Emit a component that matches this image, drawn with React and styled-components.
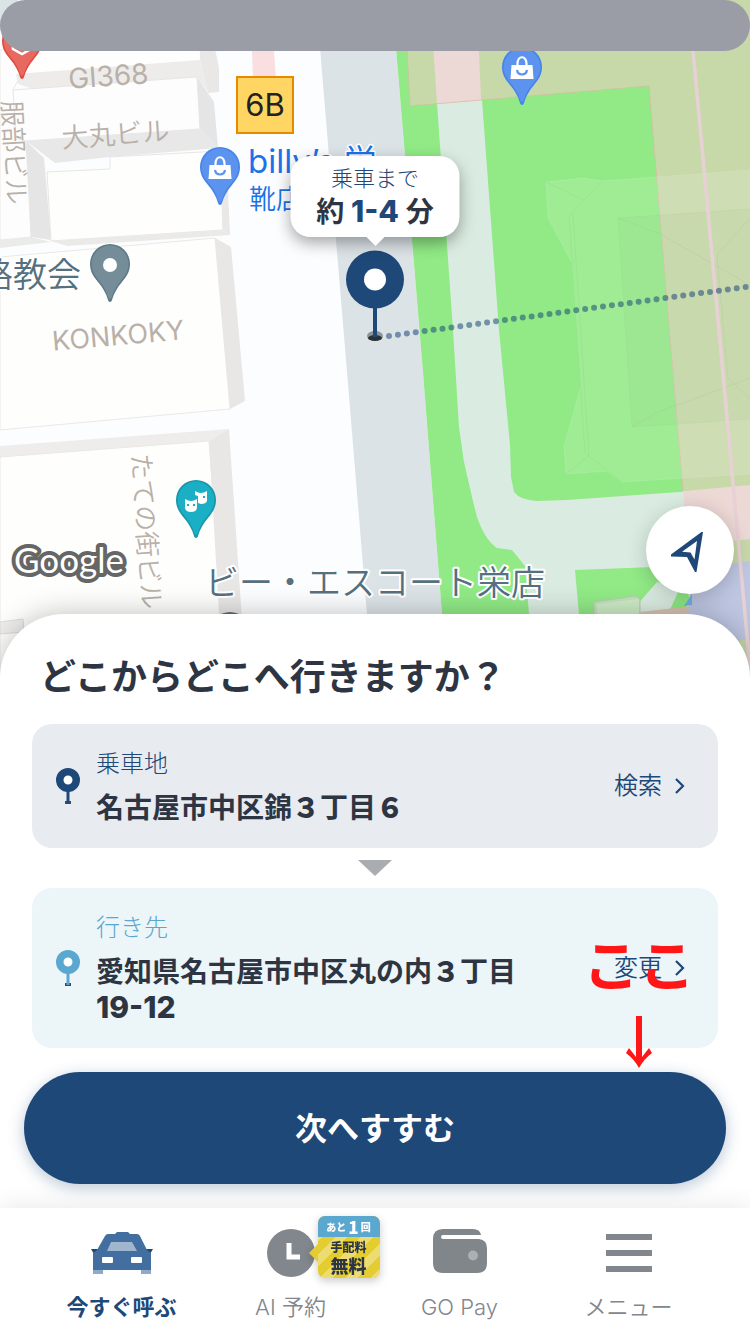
import React from 'react';
import styled, { createGlobalStyle } from 'styled-components';

const NAVY = '#1e4878';
const SKY = '#5aa7cf';
const INK = '#2d3542';
const GREY = '#82868d';

const GlobalStyle = createGlobalStyle`
	* {
		box-sizing: border-box;
	}
	body {
		margin: 0;
		background: #ffffff;
		color: ${INK};
		font-family: Inter, "Noto Sans CJK JP", sans-serif;
	}
	button {
		margin: 0;
		padding: 0;
		border: 0;
		background: none;
		color: inherit;
		font: inherit;
		cursor: pointer;
	}
`

const Page = styled.div`
	display: flex;
	flex-direction: column;
	min-height: 100vh;
	overflow-x: hidden;
`
const StatusBar = styled.div`
	position: absolute;
	top: 0;
	left: 0;
	right: 0;
	height: 51px;
	border-radius: 26px;
	background: #9b9da6;
`
const MapArea = styled.section`
	position: relative;
	height: 700px;
	overflow: hidden;
	background: #fbfdfe;
`
const MapDrawing = styled.svg`
	display: block;
	width: 100%;
	height: 100%;
`
const Bubble = styled.div`
	position: absolute;
	top: 156px;
	left: 50%;
	transform: translateX(-50%);
	display: flex;
	flex-direction: column;
	align-items: center;
	min-width: 169px;
	padding: 6px 16px 7px;
	border-radius: 20px;
	background: #ffffff;
	box-shadow: 0 6px 16px rgba(0, 0, 0, 0.35);
	white-space: nowrap;

	&::after {
		content: '';
		position: absolute;
		top: 100%;
		left: 50%;
		margin-left: -9px;
		border: 9px solid transparent;
		border-top-color: #ffffff;
		border-bottom: 0;
	}
`
const BubbleLabel = styled.span`
	color: ${NAVY};
	font-size: 22px;
	font-weight: 300;
	line-height: 32px;
`
const BubbleTime = styled.span`
	font-size: 28px;
	font-weight: 700;
	line-height: 36px;

	b {
		color: ${NAVY};
		font-size: 30px;
		font-weight: 800;
		line-height: 30px;
	}
`
const LocateButton = styled.button`
	position: absolute;
	top: 506px;
	right: 16px;
	width: 88px;
	height: 88px;
	border-radius: 50%;
	background: #ffffff;
	box-shadow: 0 4px 20px rgba(0, 0, 0, 0.2);

	svg {
		display: block;
	}
`
const Sheet = styled.main`
	position: relative;
	margin-top: -86px;
	padding: 36px 24px 24px;
	border-radius: 64px 64px 0 0;
	background: #ffffff;
	box-shadow: 0 0 28px rgba(0, 0, 0, 0.25);
`
const Heading = styled.h1`
	margin: 0 0 20px;
	padding: 0 16px;
	font-size: 36px;
	font-weight: 700;
	line-height: 54px;
`
const Stops = styled.div`
	display: flex;
	flex-direction: column;
	padding: 0 8px;
	margin-bottom: 24px;
`
const Card = styled.section`
	display: flex;
	align-items: center;
	gap: 16px;
	padding: 22px 32px 22px 24px;
	border-radius: 20px;
	background: ${props => props.$dropoff ? '#ecf5f8' : '#e8ebf0'};
`
const StopText = styled.div`
	flex: 1;
	min-width: 0;
	padding-right: 48px;
`
const StopLabel = styled.h2`
	margin: 0 0 8px;
	color: ${props => props.$dropoff ? SKY : NAVY};
	font-size: 24px;
	font-weight: 300;
	line-height: 36px;
`
const Address = styled.p`
	margin: 0;
	font-size: 28px;
	font-weight: 700;
	line-height: 36px;

	b {
		font-weight: 900;
	}
	span {
		font-size: 30px;
		font-weight: 800;
		line-height: 30px;
		white-space: nowrap;
	}
`
const CardAction = styled.button`
	display: flex;
	align-items: center;
	gap: 12px;
	color: ${NAVY};
	font-size: 24px;
	font-weight: 350;
	line-height: 36px;
`
const Down = styled.svg`
	align-self: center;
	margin: 12px 0;
`
const NextButton = styled.button`
	display: block;
	width: 100%;
	height: 112px;
	padding-bottom: 4px;
	border-radius: 56px;
	background: ${NAVY};
	box-shadow: 0 4px 16px rgba(30, 72, 120, 0.3);
	color: #ffffff;
	font-size: 32px;
	font-weight: 700;
`
const Note = styled.div`
	position: absolute;
	right: 55px;
	bottom: 140px;
	display: flex;
	flex-direction: column;
	align-items: center;
	gap: 8px;
	color: #ff1616;
	font-size: 56px;
	font-weight: 700;
	line-height: 84px;
	pointer-events: none;
`
const TabBar = styled.nav`
	position: relative;
	display: flex;
	flex: 1;
	min-height: 126px;
	padding: 0 37px;
	background: #ffffff;
	box-shadow: 0 0 24px rgba(0, 0, 0, 0.1);
`
const Tab = styled.button`
	flex: 1;
	display: flex;
	flex-direction: column;
	align-items: center;
	gap: 10px;
	padding-top: 17px;
	color: ${props => props.$active ? NAVY : GREY};
	font-size: 22px;
	font-weight: ${props => props.$active ? 700 : 350};
	line-height: 32px;
	white-space: nowrap;
`
const TabIcon = styled.span`
	position: relative;
	display: flex;
	align-items: center;
	justify-content: center;
	width: 64px;
	height: 56px;
`
const Badge = styled.span`
	position: absolute;
	top: -9px;
	left: 50px;
	padding-left: 9px;
	filter: drop-shadow(0 3px 4px rgba(0, 0, 0, 0.2));

	&::before {
		content: '';
		position: absolute;
		left: 0;
		top: 28px;
		border: 9px solid transparent;
		border-right-color: #e3cd31;
		border-left: 0;
	}
`
const BadgeBody = styled.span`
	display: flex;
	flex-direction: column;
	align-items: center;
	width: 62px;
	height: 62px;
	border-radius: 7px;
	background: repeating-linear-gradient(135deg, #e3cd31 0 9px, #ecdc72 9px 18px);
	color: ${INK};
	font-family: "Noto Sans CJK JP", sans-serif;
	font-weight: 900;
`
const BadgeTop = styled.span`
	display: flex;
	align-items: center;
	justify-content: center;
	gap: 2px;
	width: 100%;
	height: 21px;
	border-radius: 7px 7px 0 0;
	background: ${SKY};
	color: #ffffff;
	font-size: 10px;
	line-height: 21px;

	b {
		font-size: 17px;
	}
`
const BadgeLine = styled.span`
	font-size: ${props => props.$large ? 18 : 12}px;
	line-height: ${props => props.$large ? 18 : 19}px;
`

const PIN = 'M0-20A20 20 0 0 1 20 0C20 8 16 13 12 18C7 24 4 29 2 36C1.400 38.600-1.400 38.600-2 36C-4 29-7 24-12 18C-16 13-20 8-20 0A20 20 0 0 1 0-20Z'

const MapPin = ({ x, y, fill, edge, children }) => (
	<g transform={`translate(${x} ${y})`}>
		<path d={PIN} fill={edge} />
		<path d={PIN} fill={fill} transform="scale(.92)" />
		{children}
	</g>
)

const Bag = () => (
	<g>
		<path d="M-10.500-2H10.500L11.500 12H-11.500Z" fill="#fff" />
		<path d="M-4.500 0V-3C-4.500-12 4.500-12 4.500-3V0" fill="none" stroke="#fff" strokeWidth="2.200" />
		<path d="M-5 3C-4 9 4 9 5 3" fill="none" stroke="#5c93ee" strokeWidth="2.200" />
	</g>
)

const CityMap = () => (
	<MapDrawing viewBox="0 0 750 700" preserveAspectRatio="xMidYMin slice" aria-label="地図">
		<rect width="750" height="700" fill="#fbfdfe" />
		<path d="M0 0H30V30H0Z" fill="#dae4e6" />

		{/* roads and park */}
		<path d="M316 0H392L422 360L442 614L446 700H375L367 614L346 360Z" fill="#dce3e7" />
		<path d="M392 0H750V700H446L442 614L422 360Z" fill="#91ea86" />
		<path d="M430 0H477L482 100L499 330L510 445L511 477L514 492Q520 500 537 501L567 500L750 487V700H532L529 614L525 566L512 550L497 548Q485 540 477 517L472 497L464 462L459 427L453 330L437 103Z" fill="#daece1" />
		<path d="M575 570L680 566L690 600L683 614V700H582L579 614Z" fill="#91ea86" />
		<path d="M629 614L657 582L680 588L668 614Z" fill="#daece1" />
		<path d="M594 602L636 596L640 599V614H594Z" fill="#c4dfbd" stroke="#b6cdb0" />
		<path d="M597 604L639 599V614H597Z" fill="#cdebc5" />
		<path d="M640 612L692 606L683 640H640Z" fill="#d8c3b2" />

		{/* station area */}
		<path d="M405 0H750V486L683 491L649 86L410 106Z" fill="#c7d8a9" />
		<path d="M430 0H477L481 100L437 104Z" fill="#ecd8d5" />
		<path d="M407 51L410 106L649 86L683 491" fill="none" stroke="#dcb9a5" strokeOpacity=".7" />
		<path d="M683 491L750 485V540L688 546Z" fill="#ecd8d5" />
		<path d="M688 546L750 539V562L692 572Z" fill="#c7d8a9" />
		<path d="M692 572L735 563L750 561V640L740 700H680Z" fill="#bec6e2" />
		<path d="M684 606L692 594V605Z" fill="#72b2e6" />
		<path d="M740 640H750V700H740Z" fill="#c7d8a9" />

		{/* faint building blocks over the park */}
		<path d="M546 182L583 178L602 181L750 170V474L622 482L607 471L566 474L564 447L581 386L572 263L548 218Z" fill="#fff" fillOpacity=".13" stroke="#fff" strokeOpacity=".12" />
		<path d="M618 218L750 209V419L632 427Z" fill="#8fae78" fillOpacity=".08" stroke="#8fae78" strokeOpacity=".08" />
		<path d="M546 182L583 200M602 181L569 216L585 453L622 482M573 214L589 456L566 474M618 218L660 234L750 285M632 427L656 413L750 378M750 218L717 255L728 378L750 399" fill="none" stroke="#87a777" strokeOpacity=".12" />
		<path d="M689 0L693 51L719 330L748 647L752 700" fill="none" stroke="#e8d1d5" strokeWidth="3.500" />

		{/* buildings on the left */}
		<path d="M0 50L14 48L18 80L13 90L26 141L31 237L0 240Z" fill="#fdfdfd" stroke="#ebe9e8" />
		<path d="M18 0H199L200 60L16 74Z" fill="#fefefd" />
		<path d="M199 0H205L219 68V92L208 93L200 60Z" fill="#e9e8e7" />
		<path d="M16 74L200 60L208 92L197 77L33 89L18 84Z" fill="#eeecea" />
		<path d="M13 90L197 77L200 129L26 141L16 138Z" fill="#fdfdfd" stroke="#e6e6e5" />
		<path d="M197 77L214 102L218 148L200 129Z" fill="#e5e5e5" />
		<path d="M26 141L200 129L218 148L110 157L55 163Z" fill="#e8e8e8" />
		<path d="M26 141L44 158L51 240L31 237Z" fill="#e5e5e5" />
		<path d="M0 240L31 237L51 242L0 248Z" fill="#ebebea" />
		<path d="M47 172L110 169V157L220 151L223 230L51 241Z" fill="#fefefd" stroke="#e8e6e5" />
		<path d="M220 151L228 190L230 235L223 230Z" fill="#e9e8e6" />
		<path d="M51 241L223 230L230 235L67 246Z" fill="#eceae9" />
		<path d="M0 257L215 238L230 409L0 430Z" fill="#fefefd" stroke="#ebe8e7" />
		<path d="M215 238L231 247L245 401L230 409Z" fill="#e9e7e6" />
		<path d="M0 446L229 429L209 441L0 457Z" fill="#efedec" />
		<path d="M0 457L209 441L222 614V700H0Z" fill="#fefefd" stroke="#e9e7e6" />
		<path d="M209 441L229 429L242 620V700H224Z" fill="#e9e7e6" />
		<path d="M0 622L23 619L24 632L0 634Z" fill="#f0eeed" stroke="#dedcda" />
		<path d="M252 51H274L276 80H253Z" fill="#f9dfe0" />

		<g fill="#b9b0a8" fontSize="27" fontWeight="350" textAnchor="middle">
			<text transform="translate(109 86) rotate(-4)" fontSize="28" fontWeight="400">GI368</text>
			<text transform="translate(116 144) rotate(-4)">大丸ビル</text>
			<text transform="translate(119 345) rotate(-5)" fontWeight="400">KONKOKY</text>
			<text transform="translate(5 153) rotate(87)" fontSize="26">服部ビル</text>
			<text transform="translate(137 532) rotate(86)" fontSize="26">たての街ビル</text>
		</g>

		<g fill="#55707e" stroke="#fff" strokeWidth="4" strokeLinejoin="round" paintOrder="stroke" fontSize="34" fontWeight="350">
			<text x="81" y="287" textAnchor="end">路教会</text>
			<text x="375" y="595" textAnchor="middle">ビー・エスコート栄店</text>
		</g>
		<circle cx="230" cy="632" r="20" fill="#55707e" />

		<g fill="#1a73e8" stroke="#fff" strokeWidth="3" strokeLinejoin="round" paintOrder="stroke">
			<text x="248" y="173" fontSize="33">billy’s 栄</text>
			<text x="249" y="209" fontSize="27" fontWeight="350">靴店</text>
		</g>
		<rect x="237" y="77" width="56" height="56" fill="#ffd663" stroke="#e88a00" strokeWidth="2" />
		<text x="265" y="116" fontSize="31" textAnchor="middle" fill="#222">6B</text>

		<MapPin x={22} y={41} fill="#e8695f" edge="#e04a3f">
			<path d="M-9 8V-8H9V8L0 13Z" fill="none" stroke="#fff" strokeWidth="2.500" />
		</MapPin>
		<MapPin x={220} y={167} fill="#5c93ee" edge="#4783ea"><Bag /></MapPin>
		<MapPin x={522} y={67} fill="#5c93ee" edge="#4783ea"><Bag /></MapPin>
		<MapPin x={110} y={264} fill="#758d99" edge="#5f7987"><circle r="7" cy="1" fill="#fff" /></MapPin>
		<MapPin x={196} y={500} fill="#1aafc4" edge="#1796a8">
			<path d="M-1-9Q5-5 11-9V1Q10 4 5 4L2 3V-4L-1-5Z" fill="#fff" />
			<path d="M-11-1Q-5 3 1-1V7Q1 12-5 12Q-11 12-11 7Z" fill="#fff" />
			<path d="M-9 4H-7V6H-9ZM-3 4H-1V6H-3ZM7-4H9V-2H7Z" fill="#1aafc4" />
		</MapPin>

		{/* route and pick-up point */}
		<path d="M389 336L760 285" fill="none" stroke={NAVY} strokeOpacity=".55" strokeWidth="6" strokeLinecap="round" strokeDasharray="0 9" />
		<ellipse cx="375" cy="336" rx="8" ry="5" fill="#8b949a" />
		<ellipse cx="375" cy="338" rx="7" ry="3" fill="#2d3035" />
		<path d="M375 300V337" stroke={NAVY} strokeWidth="4" />
		<circle cx="375" cy="279.500" r="29" fill={NAVY} />
		<circle cx="375" cy="279.500" r="11" fill="#fff" />

		<text x="14" y="573" fontFamily="Lato, sans-serif" fontSize="35" fontWeight="400" fill="#fff" stroke="#666" strokeWidth="8" strokeLinejoin="round" paintOrder="stroke">Google</text>
	</MapDrawing>
)

const StopPin = ({ color }) => (
	<svg width="24" height="36" viewBox="0 0 24 36" aria-hidden="true">
		<path d="M9 33H15V36H9Z" fill="#3f4b5a" />
		<path d="M12 20V35" stroke={color} strokeWidth="3" />
		<circle cx="12" cy="12" r="8.250" fill="#fff" stroke={color} strokeWidth="7.500" />
	</svg>
)

const Chevron = () => (
	<svg width="12" height="18" viewBox="0 0 12 18" aria-hidden="true">
		<path d="M2 2L9 9L2 16" fill="none" stroke={NAVY} strokeWidth="2.200" />
	</svg>
)

const CarIcon = () => (
	<svg width="62" height="42" viewBox="0 0 62 42" aria-hidden="true">
		<path d="M0 17H8L6 22H3ZM62 17H54L56 22H59Z" fill={NAVY} />
		<path d="M2 36H12V42H2ZM50 36H60V42H50Z" fill="#8fa9c8" />
		<path d="M17 2H24L26 0H37L39 2H46Q48 2 49 4L56 18L60 21V38H2V21L6 18L14 4Q15 2 17 2Z" fill="#426fa0" />
		<path d="M20 10H41L46 19H16Z" fill="#a0b6cf" />
		<rect x="11" y="25" width="11" height="6" rx="1" fill="#fff" />
		<rect x="40" y="25" width="11" height="6" rx="1" fill="#fff" />
	</svg>
)

const ClockIcon = () => (
	<svg width="48" height="48" viewBox="0 0 48 48" aria-hidden="true">
		<circle cx="24" cy="24" r="24" fill={GREY} />
		<path d="M22 14V28H33" fill="none" stroke="#fff" strokeWidth="5" />
	</svg>
)

const WalletIcon = () => (
	<svg width="54" height="48" viewBox="0 0 54 48" aria-hidden="true">
		<path d="M10 0H40Q47 0 48 6H10Q8 6 8 8Q8 10 10 10H46Q54 11 54 19V34Q54 44 44 44H10Q0 44 0 34V10Q0 0 10 0Z" fill="#80868a" />
		<circle cx="40" cy="26.500" r="5" fill="#acafb3" />
	</svg>
)

const MenuIcon = () => (
	<svg width="46" height="38" viewBox="0 0 46 38" aria-hidden="true">
		<path d="M0 0H46V6H0ZM0 16H46V22H0ZM0 32H46V38H0Z" fill={GREY} />
	</svg>
)

export default function App() {
	return (
		<Page>
			<GlobalStyle />
			<MapArea>
				<CityMap />
				<StatusBar />
				<Bubble>
					<BubbleLabel>乗車まで</BubbleLabel>
					<BubbleTime>約 <b>1-4</b> 分</BubbleTime>
				</Bubble>
				<LocateButton aria-label="現在地">
					<svg width="88" height="88" viewBox="0 0 88 88">
						<path fillRule="evenodd" fill={NAVY} d="M57 26L50.500 66H49L41 51L25 50.500V48.500L55.500 26ZM51 35L36 45.700L44.500 46.500L48.500 53.500Z" />
					</svg>
				</LocateButton>
			</MapArea>

			<Sheet>
				<Heading>どこからどこへ行きますか？</Heading>
				<Stops>
					<Card>
						<StopPin color={NAVY} />
						<StopText>
							<StopLabel>乗車地</StopLabel>
							<Address>名古屋市中区錦<b>３</b>丁目<b>６</b></Address>
						</StopText>
						<CardAction>検索<Chevron /></CardAction>
					</Card>
					<Down width="34" height="16" viewBox="0 0 34 16" aria-hidden="true">
						<path d="M0 0H34L17 16Z" fill="#a9adb1" />
					</Down>
					<Card $dropoff>
						<StopPin color={SKY} />
						<StopText>
							<StopLabel $dropoff>行き先</StopLabel>
							<Address>愛知県名古屋市中区丸の内<b>３</b>丁目<span>19-12</span></Address>
						</StopText>
						<CardAction>変更<Chevron /></CardAction>
					</Card>
				</Stops>
				<NextButton>次へすすむ</NextButton>
				<Note>
					ここ
					<svg width="26" height="52" viewBox="0 0 26 52" aria-hidden="true">
						<path d="M10 0H16V41L23 32L26 37Q18 43 13 52Q8 43 0 37L3 32L10 41Z" fill="#ff1616" />
					</svg>
				</Note>
			</Sheet>

			<TabBar>
				<Tab $active>
					<TabIcon><CarIcon /></TabIcon>
					今すぐ呼ぶ
				</Tab>
				<Tab>
					<TabIcon>
						<ClockIcon />
						<Badge>
							<BadgeBody>
								<BadgeTop>あと<b>1</b>回</BadgeTop>
								<BadgeLine>手配料</BadgeLine>
								<BadgeLine $large>無料</BadgeLine>
							</BadgeBody>
						</Badge>
					</TabIcon>
					AI 予約
				</Tab>
				<Tab>
					<TabIcon><WalletIcon /></TabIcon>
					GO Pay
				</Tab>
				<Tab>
					<TabIcon><MenuIcon /></TabIcon>
					メニュー
				</Tab>
			</TabBar>
		</Page>
	);
}
